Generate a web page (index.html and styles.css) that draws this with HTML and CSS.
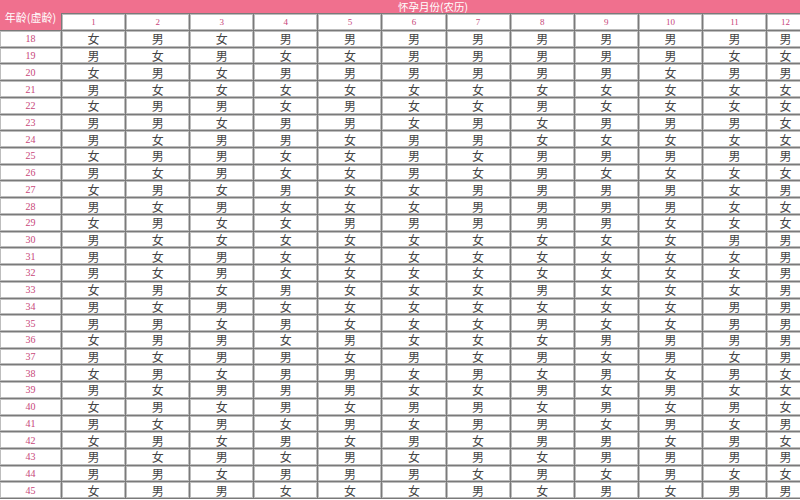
FILE: index.html
```html
<!DOCTYPE html>
<html lang="zh-CN">
<head>
<meta charset="utf-8">
<title>清宫图</title>
<link rel="stylesheet" href="styles.css">
</head>
<body>
<table class="chart">
<colgroup>
<col class="c-age">
<col class="c-m"><col class="c-m"><col class="c-m"><col class="c-m"><col class="c-m"><col class="c-m">
<col class="c-m"><col class="c-m"><col class="c-m"><col class="c-m"><col class="c-m"><col class="c-last">
</colgroup>
<thead>
<tr class="h1">
<th class="age-head" rowspan="2"><div class="age-label">年龄(虚龄)</div></th>
<th class="month-head" colspan="12"><div class="month-label">怀孕月份(农历)</div></th>
</tr>
<tr class="h2">
<th>1</th><th>2</th><th>3</th><th>4</th><th>5</th><th>6</th><th>7</th><th>8</th><th>9</th><th>10</th><th>11</th><th>12</th>
</tr>
</thead>
<tbody>
<tr><th>18</th><td>女</td><td>男</td><td>女</td><td>男</td><td>男</td><td>男</td><td>男</td><td>男</td><td>男</td><td>男</td><td>男</td><td>男</td></tr>
<tr><th>19</th><td>男</td><td>女</td><td>男</td><td>女</td><td>女</td><td>男</td><td>男</td><td>男</td><td>男</td><td>男</td><td>女</td><td>女</td></tr>
<tr><th>20</th><td>女</td><td>男</td><td>女</td><td>男</td><td>男</td><td>男</td><td>男</td><td>男</td><td>男</td><td>女</td><td>男</td><td>男</td></tr>
<tr><th>21</th><td>男</td><td>女</td><td>女</td><td>女</td><td>女</td><td>女</td><td>女</td><td>女</td><td>女</td><td>女</td><td>女</td><td>女</td></tr>
<tr><th>22</th><td>女</td><td>男</td><td>男</td><td>女</td><td>男</td><td>女</td><td>女</td><td>男</td><td>女</td><td>女</td><td>女</td><td>女</td></tr>
<tr><th>23</th><td>男</td><td>男</td><td>女</td><td>男</td><td>男</td><td>女</td><td>男</td><td>女</td><td>男</td><td>男</td><td>男</td><td>女</td></tr>
<tr><th>24</th><td>男</td><td>女</td><td>男</td><td>男</td><td>女</td><td>男</td><td>男</td><td>女</td><td>女</td><td>女</td><td>女</td><td>女</td></tr>
<tr><th>25</th><td>女</td><td>男</td><td>男</td><td>女</td><td>女</td><td>男</td><td>女</td><td>男</td><td>男</td><td>男</td><td>男</td><td>男</td></tr>
<tr><th>26</th><td>男</td><td>女</td><td>男</td><td>女</td><td>女</td><td>男</td><td>女</td><td>男</td><td>女</td><td>女</td><td>女</td><td>女</td></tr>
<tr><th>27</th><td>女</td><td>男</td><td>女</td><td>男</td><td>女</td><td>女</td><td>男</td><td>男</td><td>男</td><td>男</td><td>女</td><td>男</td></tr>
<tr><th>28</th><td>男</td><td>女</td><td>男</td><td>女</td><td>女</td><td>女</td><td>男</td><td>男</td><td>男</td><td>男</td><td>女</td><td>女</td></tr>
<tr><th>29</th><td>女</td><td>男</td><td>女</td><td>女</td><td>男</td><td>男</td><td>男</td><td>男</td><td>男</td><td>女</td><td>女</td><td>女</td></tr>
<tr><th>30</th><td>男</td><td>女</td><td>女</td><td>女</td><td>女</td><td>女</td><td>女</td><td>女</td><td>女</td><td>女</td><td>男</td><td>男</td></tr>
<tr><th>31</th><td>男</td><td>女</td><td>男</td><td>女</td><td>女</td><td>女</td><td>女</td><td>女</td><td>女</td><td>女</td><td>女</td><td>男</td></tr>
<tr><th>32</th><td>男</td><td>女</td><td>男</td><td>女</td><td>女</td><td>女</td><td>女</td><td>女</td><td>女</td><td>女</td><td>女</td><td>男</td></tr>
<tr><th>33</th><td>女</td><td>男</td><td>女</td><td>男</td><td>女</td><td>女</td><td>女</td><td>男</td><td>女</td><td>女</td><td>女</td><td>男</td></tr>
<tr><th>34</th><td>男</td><td>女</td><td>男</td><td>女</td><td>女</td><td>女</td><td>女</td><td>女</td><td>女</td><td>女</td><td>男</td><td>男</td></tr>
<tr><th>35</th><td>男</td><td>男</td><td>女</td><td>男</td><td>女</td><td>女</td><td>女</td><td>男</td><td>女</td><td>女</td><td>男</td><td>男</td></tr>
<tr><th>36</th><td>女</td><td>男</td><td>男</td><td>女</td><td>男</td><td>女</td><td>女</td><td>女</td><td>男</td><td>男</td><td>男</td><td>男</td></tr>
<tr><th>37</th><td>男</td><td>女</td><td>男</td><td>男</td><td>女</td><td>男</td><td>女</td><td>男</td><td>女</td><td>男</td><td>女</td><td>男</td></tr>
<tr><th>38</th><td>女</td><td>男</td><td>女</td><td>男</td><td>男</td><td>女</td><td>男</td><td>女</td><td>男</td><td>女</td><td>男</td><td>女</td></tr>
<tr><th>39</th><td>男</td><td>女</td><td>男</td><td>男</td><td>男</td><td>女</td><td>女</td><td>男</td><td>女</td><td>男</td><td>女</td><td>女</td></tr>
<tr><th>40</th><td>女</td><td>男</td><td>女</td><td>男</td><td>女</td><td>男</td><td>男</td><td>女</td><td>男</td><td>女</td><td>男</td><td>女</td></tr>
<tr><th>41</th><td>男</td><td>女</td><td>男</td><td>女</td><td>男</td><td>女</td><td>男</td><td>男</td><td>女</td><td>男</td><td>女</td><td>男</td></tr>
<tr><th>42</th><td>女</td><td>男</td><td>女</td><td>男</td><td>女</td><td>男</td><td>女</td><td>男</td><td>男</td><td>女</td><td>男</td><td>女</td></tr>
<tr><th>43</th><td>男</td><td>女</td><td>男</td><td>女</td><td>男</td><td>女</td><td>男</td><td>女</td><td>男</td><td>男</td><td>男</td><td>男</td></tr>
<tr><th>44</th><td>男</td><td>男</td><td>女</td><td>男</td><td>男</td><td>男</td><td>女</td><td>男</td><td>女</td><td>男</td><td>女</td><td>女</td></tr>
<tr><th>45</th><td>女</td><td>男</td><td>男</td><td>女</td><td>女</td><td>女</td><td>男</td><td>女</td><td>男</td><td>女</td><td>男</td><td>男</td></tr>
</tbody>
</table>
</body>
</html>
```
FILE: styles.css
```css
html, body {
  margin: 0;
  padding: 0;
  background: #ffffff;
  overflow: hidden;
}

.chart {
  table-layout: fixed;
  width: 806px;
  border-collapse: separate;
  border-spacing: 1px;
  margin: 0 0 0 -1px;
  background: linear-gradient(#f0708e 0, #f0708e 13px, #7a7a7a 13px);
  font-family: "Noto Sans CJK SC", "DejaVu Sans", sans-serif;
}

.c-age { width: 61px; }
.c-m { width: 63.1px; }
.c-last { width: 37px; }

.chart th,
.chart td {
  box-sizing: border-box;
  padding: 0;
  border: 1px solid #bdbdbd;
  background: #ffffff;
  text-align: center;
  vertical-align: middle;
  font-weight: normal;
  overflow: hidden;
  white-space: nowrap;
}

.chart tbody td {
  height: 15.72px;
  font-size: 12px;
  line-height: 13px;
  color: #444444;
}

.chart tbody th {
  height: 15.72px;
  font-family: "Liberation Serif", serif;
  font-size: 10px;
  line-height: 13px;
  color: #c8477a;
}

.h1 th {
  height: 12px;
  background: #f0708e;
  border-color: #f0708e;
  color: #ffffff;
}

.chart .month-head {
  overflow: visible;
  border-width: 0 1px;
}

.h2 th {
  height: 16px;
  font-family: "Liberation Serif", serif;
  font-size: 9px;
  line-height: 13px;
  color: #c8477a;
}

.age-head {
  vertical-align: top;
}

.age-label {
  display: flex;
  justify-content: center;
  font-size: 11px;
  line-height: 14px;
  padding-top: 3px;
  color: #ffffff;
}

.month-label {
  font-size: 10.5px;
  line-height: 12px;
  color: #ffffff;
}
```
